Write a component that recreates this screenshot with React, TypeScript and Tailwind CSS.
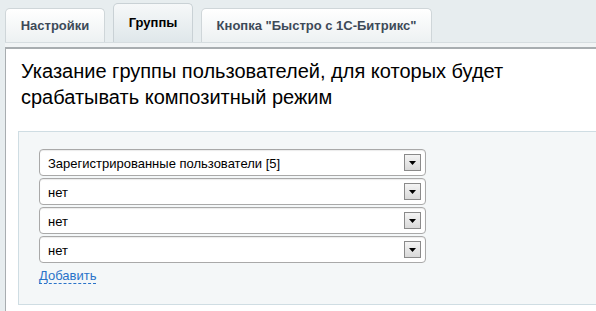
const tabs = [
  { label: "Настройки", active: false, width: "w-[100px]" },
  { label: "Группы", active: true, width: "w-[80px]" },
  { label: 'Кнопка "Быстро с 1С-Битрикс"', active: false, width: "w-[231px]" },
];

const groups = ["Зарегистрированные пользователи [5]", "нет", "нет", "нет"];

const Select = ({ value }: { value: string }) => (
  <div className="flex items-center justify-between h-[27px] w-[387px] bg-white border border-[#a9a9a9] rounded-[4px] shadow-[inset_0_1px_1px_rgba(0,0,0,0.08)] pl-[8px] pr-[4px]">
    <span className="text-[13px] text-black leading-none pt-[1px]">{value}</span>
    <span className="flex items-center justify-center w-[17px] h-[17px] border border-[#8a8a8a] bg-gradient-to-b from-[#f4f4f4] to-[#d9d9d9]">
      <svg width="7" height="4" viewBox="0 0 7 4">
        <path d="M0 0h7L3.5 4z" fill="#000" />
      </svg>
    </span>
  </div>
);

const App = () => {
  return (
    <div
      className="w-[596px] h-[311px] overflow-hidden bg-[#e7edef]"
      style={{ fontFamily: '"Liberation Sans", Arial, sans-serif' }}
    >
      <div className="flex items-end gap-[8px] pl-[5px] h-[42px]">
        {tabs.map((tab) => (
          <div
            key={tab.label}
            className={`flex items-center justify-center border border-b-0 rounded-t-[5px] text-[13px] font-bold ${tab.width} ${
              tab.active
                ? "h-[39px] bg-gradient-to-b from-[#f6f8f9] to-[#dfe7ea] border-[#c9d1d5] text-black"
                : "h-[34px] bg-gradient-to-b from-white to-[#edf1f2] border-[#cfd6d9] text-[#3d4a58]"
            }`}
          >
            {tab.label}
          </div>
        ))}
      </div>
      <div className="ml-[5px] h-[5px] bg-[#f1f4f5] border-t border-[#d6dde0]" />
      <div className="ml-[5px] bg-white border-t-2 border-l border-[#a8adb0] h-[270px] pt-[9px] pl-[12px]">
        <h1 className="text-[20px] leading-[26px] text-black pl-[3px]">
          Указание группы пользователей, для которых будет
          <br />
          срабатывать композитный режим
        </h1>
        <div className="mt-[21px] bg-[#f4f7f8] border border-r-0 border-[#cfdde3] h-[174px] pt-[17px] pl-[20px]">
          <div className="flex flex-col gap-[2px]">
            {groups.map((g, i) => (
              <Select key={i} value={g} />
            ))}
          </div>
          <a className="inline-block mt-[1px] text-[13px] text-[#2a73c9] border-b border-dashed border-[#2a73c9] leading-[15px]">
            Добавить
          </a>
        </div>
      </div>
    </div>
  );
};

export default App;
